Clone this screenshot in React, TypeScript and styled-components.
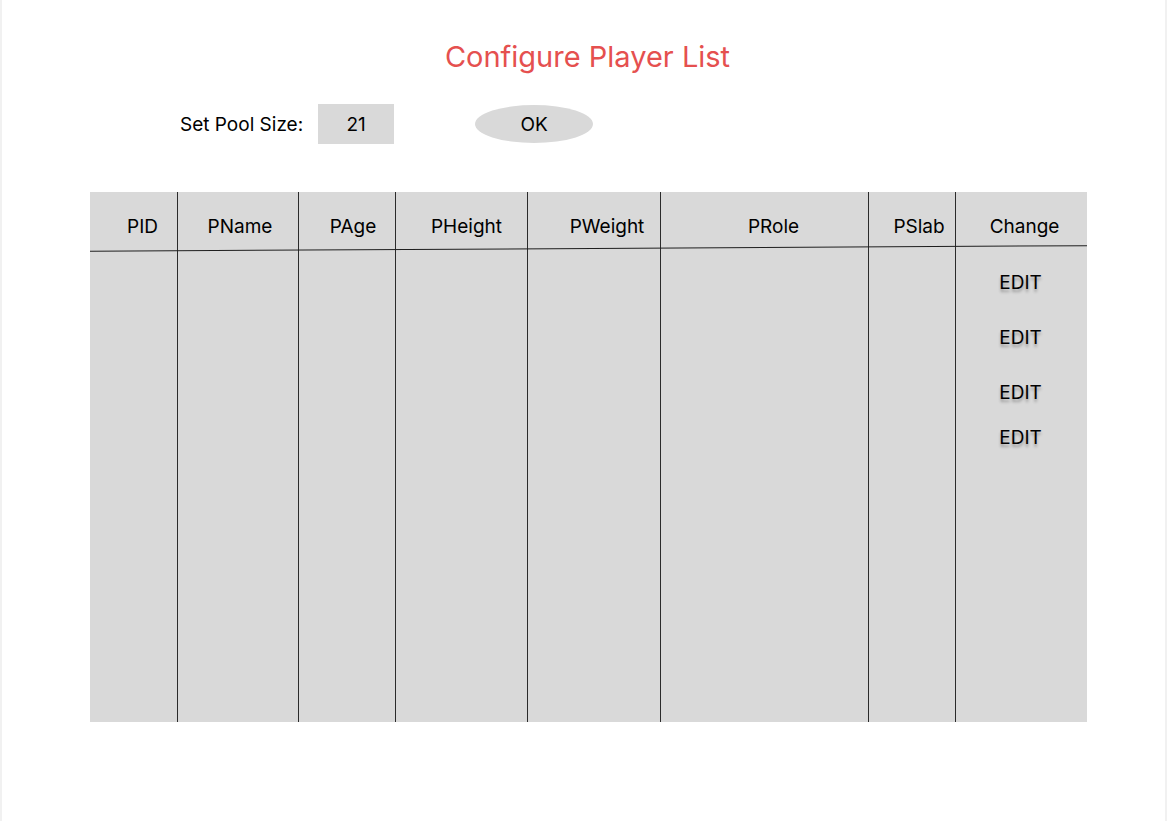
import React from 'react';
import styled, { createGlobalStyle } from 'styled-components';

const GlobalStyle = createGlobalStyle`
  html, body {
    margin: 0;
    padding: 0;
    background: #ffffff;
  }
  body {
    font-family: Inter, "Noto Sans", sans-serif;
    color: #000;
  }
`;

const Page = styled.div`
  box-sizing: border-box;
  width: 1167px;
  height: 821px;
  border-left: 2px solid #f1f1f1;
  border-right: 2px solid #f1f1f1;
  padding-top: 37px;
  display: flex;
  flex-direction: column;
`;

const Title = styled.h1`
  margin: 0;
  height: 40px;
  line-height: 40px;
  text-align: center;
  font-size: 29px;
  font-weight: 400;
  color: #e5504f;
  padding-left: 8px;
`;

const Controls = styled.div`
  display: flex;
  align-items: center;
  margin-top: 27px;
  padding-left: 178px;
  height: 40px;
`;

const Label = styled.span`
  font-size: 19px;
  margin-right: 15px;
`;

const SizeBox = styled.div`
  width: 76px;
  height: 40px;
  background: #d9d9d9;
  display: flex;
  align-items: center;
  justify-content: center;
  font-size: 19px;
`;

const OkButton = styled.button`
  margin-left: 81px;
  width: 118px;
  height: 38px;
  border: none;
  border-radius: 50%;
  background: #d9d9d9;
  font-family: inherit;
  font-size: 19px;
  color: #000;
  padding: 0;
`;

const Table = styled.div`
  position: relative;
  margin-top: 48px;
  margin-left: 88px;
  width: 997px;
  height: 530px;
  background: #d9d9d9;
  display: grid;
  grid-template-columns: 87px 121px 97px 132px 133px 208px 87px 132px;

  &::after {
    content: '';
    position: absolute;
    left: 0;
    right: 0;
    top: 56px;
    height: 1px;
    background: #1f1f1f;
    transform: rotate(-0.32deg);
  }
`;

const Column = styled.div<{ $first?: boolean }>`
  display: flex;
  flex-direction: column;
  border-left: ${p => (p.$first ? 'none' : '1px solid #2b2b2b')};
`;

const HeadCell = styled.div<{ $shift: number }>`
  height: 68px;
  display: flex;
  align-items: center;
  justify-content: center;
  padding-left: ${p => p.$shift * 2}px;
  font-size: 19px;
`;

const EditList = styled.div`
  display: flex;
  flex-direction: column;
  align-items: center;
  padding-top: 11px;
`;

const EditLink = styled.span<{ $gap: number }>`
  margin-top: ${p => p.$gap}px;
  font-size: 19px;
  line-height: 24px;
  text-shadow: 0 3px 3px rgba(0, 0, 0, 0.3);
  padding-right: 2px;
`;

const columns = [
  { label: 'PID', shift: 9 },
  { label: 'PName', shift: 2 },
  { label: 'PAge', shift: 6 },
  { label: 'PHeight', shift: 5 },
  { label: 'PWeight', shift: 13 },
  { label: 'PRole', shift: 9 },
  { label: 'PSlab', shift: 7 },
  { label: 'Change', shift: 3 },
];

const editGaps = [0, 31, 31, 21];

export default function App() {
  return (
    <>
      <GlobalStyle />
      <Page>
        <Title>Configure Player List</Title>
        <Controls>
          <Label>Set Pool Size:</Label>
          <SizeBox>21</SizeBox>
          <OkButton>OK</OkButton>
        </Controls>
        <Table>
          {columns.map((col, i) => (
            <Column key={col.label} $first={i === 0}>
              <HeadCell $shift={col.shift}>{col.label}</HeadCell>
              {col.label === 'Change' && (
                <EditList>
                  {editGaps.map((g, j) => (
                    <EditLink key={j} $gap={g}>EDIT</EditLink>
                  ))}
                </EditList>
              )}
            </Column>
          ))}
        </Table>
      </Page>
    </>
  );
}
